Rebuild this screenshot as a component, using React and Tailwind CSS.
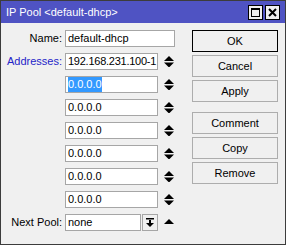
import React from "react";

const font = { fontFamily: '"Liberation Sans", Arial, sans-serif' };

function Spin() {
  return (
    <svg width="10" height="11" viewBox="0 0 10 11" className="ml-[6px] shrink-0">
      <polygon points="0,5 5,0 10,5" fill="#000" />
      <polygon points="0,6.5 10,6.5 5,11.5" fill="#000" />
    </svg>
  );
}

function UpOnly() {
  return (
    <svg width="10" height="11" viewBox="0 0 10 11" className="ml-[6px] shrink-0">
      <polygon points="0,7 5,2 10,7" fill="#000" />
    </svg>
  );
}

function Field({ children, className = "" }) {
  return (
    <div
      className={
        "h-[17px] bg-white border border-[#a6a6a6] flex items-center pl-[2px] overflow-hidden whitespace-nowrap text-[11px] text-black " +
        className
      }
    >
      {children}
    </div>
  );
}

function Btn({ children, def }) {
  return (
    <div
      className={
        "h-[22px] w-[86px] flex items-center justify-center text-[11px] text-black bg-[#f0f0f0] " +
        (def ? "border border-black" : "border border-[#adadad]")
      }
    >
      {children}
    </div>
  );
}

export default function App() {
  const rows = ["0.0.0.0", "0.0.0.0", "0.0.0.0", "0.0.0.0", "0.0.0.0"];
  return (
    <div style={font} className="w-[286px] h-[245px] bg-[#f0f0f0] border border-[#3c3c3c] flex flex-col">
      <div className="h-[22px] bg-[#4f53c3] flex items-center justify-between pl-[5px] pr-[5px] shrink-0">
        <span className="text-white text-[11px]">IP Pool &lt;default-dhcp&gt;</span>
        <div className="flex gap-[2px]">
          <div className="w-[15px] h-[15px] bg-[#f0f0f0] border border-black flex items-center justify-center">
            <div className="w-[9px] h-[9px] border border-black border-t-2" />
          </div>
          <div className="w-[15px] h-[15px] bg-[#f0f0f0] border border-black flex items-center justify-center">
            <svg width="9" height="9" viewBox="0 0 9 9">
              <path d="M1 1 L8 8 M8 1 L1 8" stroke="#000" strokeWidth="2" />
            </svg>
          </div>
        </div>
      </div>
      <div className="flex pt-[7px]">
        <div className="flex flex-col gap-[6px] w-[190px]">
          <div className="flex items-center">
            <div className="w-[64px] text-right pr-[3px] text-[11px] text-black">Name:</div>
            <Field className="w-[110px]">default-dhcp</Field>
          </div>
          <div className="flex items-center">
            <div className="w-[64px] text-right pr-[3px] text-[11px] text-[#2424c8]">Addresses:</div>
            <Field className="w-[93px] tracking-[-0.25px]">192.168.231.100-1</Field>
            <Spin />
          </div>
          <div className="flex items-center">
            <div className="w-[64px]" />
            <Field className="w-[93px]">
              <span className="bg-[#3399ff] text-white">0.0.0.0</span>
            </Field>
            <Spin />
          </div>
          {rows.map((r, i) => (
            <div key={i} className="flex items-center">
              <div className="w-[64px]" />
              <Field className="w-[93px]">{r}</Field>
              <Spin />
            </div>
          ))}
          <div className="flex items-center">
            <div className="w-[64px] text-right pr-[3px] text-[11px] text-black">Next Pool:</div>
            <Field className="w-[76px]">none</Field>
            <div className="ml-[1px] w-[16px] h-[17px] border border-[#a6a6a6] bg-[#f0f0f0] flex items-center justify-center">
              <svg width="8" height="9" viewBox="0 0 8 9">
                <rect x="0" y="0" width="8" height="1.5" fill="#000" />
                <rect x="3" y="2" width="2" height="3" fill="#000" />
                <polygon points="0,5 8,5 4,9" fill="#000" />
              </svg>
            </div>
            <UpOnly />
          </div>
        </div>
        <div className="flex flex-col ml-[1px]">
          <div className="flex flex-col gap-[3px]">
            <Btn def>OK</Btn>
            <Btn>Cancel</Btn>
            <Btn>Apply</Btn>
          </div>
          <div className="flex flex-col gap-[3px] mt-[10px]">
            <Btn>Comment</Btn>
            <Btn>Copy</Btn>
            <Btn>Remove</Btn>
          </div>
        </div>
      </div>
    </div>
  );
}
